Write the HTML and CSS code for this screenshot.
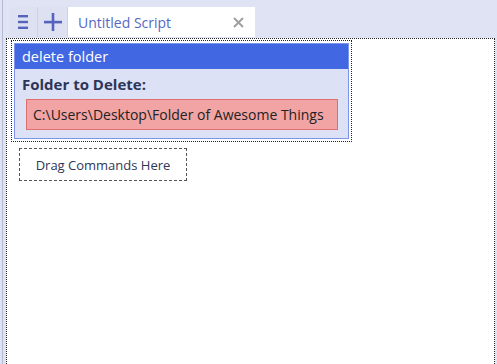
FILE: index.html
```html
<!DOCTYPE html>
<html>
<head>
<meta charset="utf-8">
<link rel="stylesheet" href="styles.css">
</head>
<body>
<div class="app">
  <div class="tabbar">
    <div class="tbtn menu">
      <svg width="10" height="14" viewBox="0 0 10 14"><rect x="0" y="0" width="10" height="2.4" fill="#5563bd"/><rect x="0" y="5.8" width="10" height="2.4" fill="#5563bd"/><rect x="0" y="11.6" width="10" height="2.4" fill="#5563bd"/></svg>
    </div>
    <div class="tbtn plus">
      <svg width="18" height="18" viewBox="0 0 18 18"><rect x="0" y="7.8" width="18" height="2.6" fill="#5563bd"/><rect x="7.7" y="0" width="2.6" height="18" fill="#5563bd"/></svg>
    </div>
    <div class="tab">
      <span class="tab-title">Untitled Script</span>
      <svg class="tab-close" width="11" height="11" viewBox="0 0 11 11"><path d="M1 1 L10 10 M10 1 L1 10" stroke="#a0a0a0" stroke-width="2"/></svg>
    </div>
  </div>
  <div class="canvas">
    <div class="block-wrap">
      <div class="block">
        <div class="block-head">delete folder</div>
        <div class="block-body">
          <div class="label">Folder to Delete:</div>
          <div class="input">C:\Users\Desktop\Folder of Awesome Things</div>
        </div>
      </div>
    </div>
    <div class="drop">Drag Commands Here</div>
  </div>
</div>
</body>
</html>
```
FILE: styles.css
```css
html, body {
  margin: 0;
  padding: 0;
  height: 100%;
}
body {
  background: #dfe3f4;
  font-family: "Open Sans", "Noto Sans", sans-serif;
  overflow: hidden;
}
.app {
  display: flex;
  flex-direction: column;
  height: 100%;
  border-left: 1px solid #b4bbd0;
  margin-left: 2px;
  box-sizing: border-box;
}
.tabbar {
  display: flex;
  align-items: stretch;
  height: 30px;
  margin-top: 7px;
  padding-left: 6px;
}
.tbtn {
  width: 28px;
  display: flex;
  align-items: center;
  justify-content: center;
  border-right: 1px solid #cdd2e6;
  background: #dde1f2;
}
.tbtn.plus {
  width: 29px;
}
.tab {
  width: 187px;
  background: #fff;
  display: flex;
  align-items: center;
  justify-content: space-between;
  padding: 0 11px 0 10px;
  box-sizing: border-box;
}
.tab-title {
  color: #5569c2;
  font-size: 14px;
}
.canvas {
  flex: 1;
  background: #fff;
  border: 1px dotted #222;
  border-bottom: none;
  margin-left: 3px;
  margin-right: 2px;
  margin-top: 1px;
  padding: 1px 4px;
  display: flex;
  flex-direction: column;
  align-items: flex-start;
}
.block-wrap {
  border: 1px dotted #222;
  padding: 2px;
}
.block {
  width: 335px;
  border: 1px solid #7d95ea;
  background: #dce1f6;
  box-sizing: border-box;
}
.block-head {
  background: #4167e2;
  color: #fff;
  font-size: 14.5px;
  height: 25px;
  line-height: 25px;
  padding-left: 7px;
}
.block-body {
  padding: 6px 10px 8px 7px;
}
.label {
  font-weight: bold;
  color: #2c3558;
  font-size: 15px;
  line-height: 19px;
}
.input {
  margin-top: 5px;
  margin-left: 4px;
  background: #f2a4a4;
  border: 1px solid #df6f6f;
  height: 29px;
  line-height: 29px;
  padding-left: 6px;
  color: #222;
  font-size: 14px;
  white-space: nowrap;
}
.drop {
  margin-top: 6px;
  margin-left: 8px;
  width: 168px;
  height: 33px;
  box-sizing: border-box;
  border: 1px dashed #555;
  display: flex;
  align-items: center;
  justify-content: center;
  font-size: 13px;
  color: #2f3658;
}
```
